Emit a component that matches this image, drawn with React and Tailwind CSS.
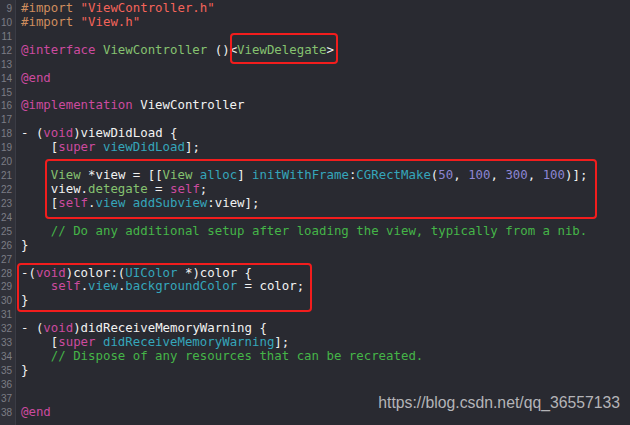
const C = {
    w: "text-[#f2f2f2]",
    pre: "text-[#cf8d5e]",
    str: "text-[#f5645a]",
    kw: "text-[#cc4a9f]",
    cls: "text-[#86c270]",
    fn: "text-[#35a6bb]",
    num: "text-[#8d86d4]",
    com: "text-[#45b548]",
};

const lines = [
    [9, [["#import ", "pre"], ['"ViewController.h"', "str"]]],
    [10, [["#import ", "pre"], ['"View.h"', "str"]]],
    [11, []],
    [12, [["@interface ", "kw"], ["ViewController", "cls"], [" ()<", "w"], ["ViewDelegate", "cls"], [">", "w"]]],
    [13, []],
    [14, [["@end", "kw"]]],
    [15, []],
    [16, [["@implementation ", "kw"], ["ViewController", "w"]]],
    [17, []],
    [18, [["- (", "w"], ["void", "kw"], [")viewDidLoad {", "w"]]],
    [19, [["    [", "w"], ["super ", "kw"], ["viewDidLoad", "fn"], ["];", "w"]]],
    [20, []],
    [21, [
        ["    ", "w"], ["View", "cls"], [" *view = [[", "w"], ["View", "cls"], [" ", "w"],
        ["alloc", "fn"], ["] ", "w"], ["initWithFrame", "fn"], [":", "w"], ["CGRectMake", "fn"],
        ["(", "w"], ["50", "num"], [", ", "w"], ["100", "num"], [", ", "w"], ["300", "num"],
        [", ", "w"], ["100", "num"], [")];", "w"],
    ]],
    [22, [["    view.", "w"], ["detegate", "cls"], [" = ", "w"], ["self", "kw"], [";", "w"]]],
    [23, [["    [", "w"], ["self", "kw"], [".", "w"], ["view", "fn"], [" ", "w"], ["addSubview", "fn"], [":view];", "w"]]],
    [24, []],
    [25, [["    // Do any additional setup after loading the view, typically from a nib.", "com"]]],
    [26, [["}", "w"]]],
    [27, []],
    [28, [["-(", "w"], ["void", "kw"], [")color:(", "w"], ["UIColor", "fn"], [" *)color {", "w"]]],
    [29, [["    ", "w"], ["self", "kw"], [".", "w"], ["view", "fn"], [".", "w"], ["backgroundColor", "fn"], [" = color;", "w"]]],
    [30, [["}", "w"]]],
    [31, []],
    [32, [["- (", "w"], ["void", "kw"], [")didReceiveMemoryWarning {", "w"]]],
    [33, [["    [", "w"], ["super ", "kw"], ["didReceiveMemoryWarning", "fn"], ["];", "w"]]],
    [34, [["    // Dispose of any resources that can be recreated.", "com"]]],
    [35, [["}", "w"]]],
    [36, []],
    [37, []],
    [38, [["@end", "kw"]]],
];

export default function App() {
    return (
        <div className="relative w-[630px] h-[425px] overflow-hidden bg-[#292a31]">
            <div className="flex h-full">
                {/* gouttière des numéros */}
                <div className="w-[16px] shrink-0 bg-[#303139] border-r border-[#3b3c45] flex flex-col items-end pr-[3px] pt-[2px] font-['Liberation_Sans',sans-serif] text-[10px] text-[#7c7d85]">
                    {lines.map(([n]) => (
                        <div key={n} className="h-[13.93px] leading-[13.93px]">
                            {n}
                        </div>
                    ))}
                </div>

                {/* code */}
                <div className="pl-[5px] pt-[2px] font-['DejaVu_Sans_Mono',monospace] text-[12.38px] whitespace-pre">
                    {lines.map(([n, toks]) => (
                        <div key={n} className="h-[13.93px] leading-[13.93px]">
                            {toks.map(([t, c], i) => (
                                <span key={i} className={C[c]}>
                                    {t}
                                </span>
                            ))}
                        </div>
                    ))}
                </div>
            </div>

            {/* encadrés rouges */}
            <div className="absolute left-[230px] top-[33px] w-[108px] h-[31px] border-2 border-[#f21d1d] rounded-[4px]"></div>
            <div className="absolute left-[45px] top-[159px] w-[552px] h-[60px] border-2 border-[#f21d1d] rounded-[4px]"></div>
            <div className="absolute left-[17px] top-[263px] w-[295px] h-[49px] border-2 border-[#f21d1d] rounded-[4px]"></div>

            <div className="absolute right-[10px] bottom-[10px] font-['Liberation_Sans',sans-serif] text-[15.75px] text-[#b4b4b8]">
                https://blog.csdn.net/qq_36557133
            </div>
        </div>
    );
}
